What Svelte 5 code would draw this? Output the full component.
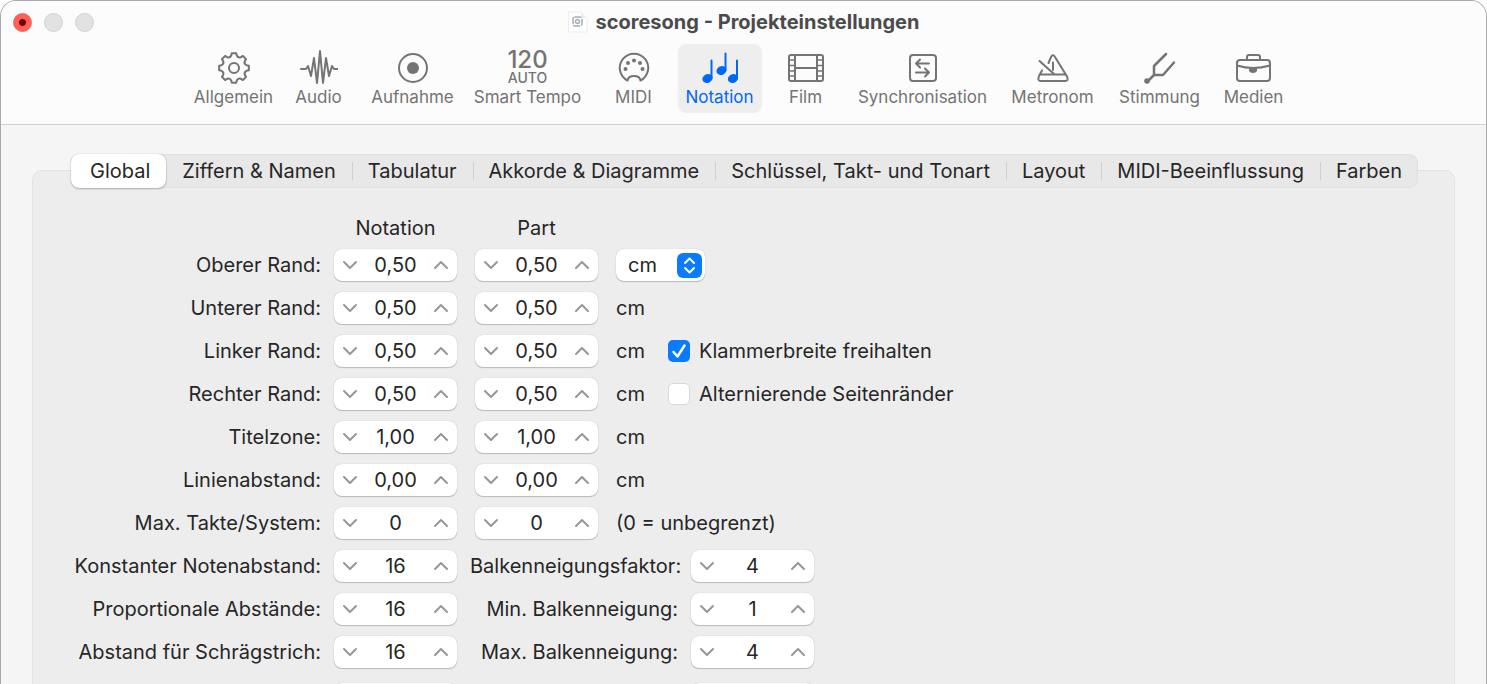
<script lang="ts">
	let activeTool = $state('Notation');
	let activeTab = $state('Global');
	let unit = $state('cm');
	let bracketWidth = $state(true);
	let alternatingMargins = $state(false);

	const tools = [
		{ name: 'Allgemein', width: 80 },
		{ name: 'Audio', width: 82 },
		{ name: 'Aufnahme', width: 98 },
		{ name: 'Smart Tempo', width: 124 },
		{ name: 'MIDI', width: 80 },
		{ name: 'Notation', width: 84 },
		{ name: 'Film', width: 80 },
		{ name: 'Synchronisation', width: 146 },
		{ name: 'Metronom', width: 106 },
		{ name: 'Stimmung', width: 100 },
		{ name: 'Medien', width: 80 }
	];

	const tabs = [
		'Global',
		'Ziffern & Namen',
		'Tabulatur',
		'Akkorde & Diagramme',
		'Schlüssel, Takt- und Tonart',
		'Layout',
		'MIDI-Beeinflussung',
		'Farben'
	];

	let margins = $state([
		{ label: 'Oberer Rand', score: '0,50', part: '0,50' },
		{ label: 'Unterer Rand', score: '0,50', part: '0,50' },
		{ label: 'Linker Rand', score: '0,50', part: '0,50' },
		{ label: 'Rechter Rand', score: '0,50', part: '0,50' },
		{ label: 'Titelzone', score: '1,00', part: '1,00' },
		{ label: 'Linienabstand', score: '0,00', part: '0,00' },
		{ label: 'Max. Takte/System', score: '0', part: '0' }
	]);

	let spacing = $state([
		{ label: 'Konstanter Notenabstand', value: '16', beamLabel: 'Balkenneigungsfaktor', beam: '4' },
		{ label: 'Proportionale Abstände', value: '16', beamLabel: 'Min. Balkenneigung', beam: '1' },
		{ label: 'Abstand für Schrägstrich', value: '16', beamLabel: 'Max. Balkenneigung', beam: '4' }
	]);

	// outline of the gear, eight teeth with rounded valleys between them
	function gearPath() {
		const at = (r: number, a: number) =>
			`${(17 + r * Math.sin(a)).toFixed(2)} ${(17 - r * Math.cos(a)).toFixed(2)}`;
		let d = '';
		for (let i = 0; i < 8; i++) {
			const a = (i * Math.PI) / 4;
			d += `${i ? 'L' : 'M'}${at(15, a - 0.15)}L${at(15, a + 0.15)}L${at(12.8, a + 0.22)}`;
			d += `Q${at(10.6, a + Math.PI / 8)} ${at(12.8, a + Math.PI / 4 - 0.22)}`;
		}
		return d + 'Z';
	}

	// values use a decimal comma, keep the number of decimals while stepping
	function step(value: string, direction: number) {
		const decimals = value.split(',')[1]?.length ?? 0;
		const next = Math.max(0, parseFloat(value.replace(',', '.')) + direction / 10 ** decimals);
		return next.toFixed(decimals).replace('.', ',');
	}
</script>

{#snippet stepper(id: string, name: string, value: string, update: (v: string) => void)}
	<div class="stepper">
		<button type="button" aria-label={`${name} verringern`} onclick={() => update(step(value, -1))}>
			<svg width="16" height="10" viewBox="0 0 16 10"><path d="M2 2l6 6 6-6" /></svg>
		</button>
		<input {id} type="text" aria-label={name} {value} onchange={(e) => update(e.currentTarget.value)} />
		<button type="button" aria-label={`${name} erhöhen`} onclick={() => update(step(value, 1))}>
			<svg width="16" height="10" viewBox="0 0 16 10"><path d="M2 8l6-6 6 6" /></svg>
		</button>
	</div>
{/snippet}

{#snippet icon(name: string)}
	{#if name === 'Smart Tempo'}
		<span class="tempo"><span class="bpm">120</span><span class="mode">AUTO</span></span>
	{:else if name === 'Allgemein'}
		<svg width="34" height="34" viewBox="0 0 34 34">
			<path d={gearPath()} />
			<circle cx="17" cy="17" r="5" />
		</svg>
	{:else if name === 'Audio'}
		<svg width="38" height="36" viewBox="0 0 38 36">
			<path d="M1 19h5l2-3 3 10 3-18 3 25 3-32 3 32 3-25 3 18 3-10 2 3h4" />
		</svg>
	{:else if name === 'Aufnahme'}
		<svg width="34" height="34" viewBox="0 0 34 34">
			<circle cx="17" cy="17" r="14" />
			<circle class="solid" cx="17" cy="17" r="6" />
		</svg>
	{:else if name === 'MIDI'}
		<svg width="34" height="34" viewBox="0 0 34 34">
			<path d="M10.500 29.500A14.200 14.200 0 1 1 23.500 29.500C22.500 23.500 11.500 23.500 10.500 29.500Z" />
			<g class="solid">
				<circle cx="8.500" cy="18" r="2" />
				<circle cx="11" cy="12" r="2" />
				<circle cx="17" cy="9.500" r="2" />
				<circle cx="23" cy="12" r="2" />
				<circle cx="25.500" cy="18" r="2" />
			</g>
		</svg>
	{:else if name === 'Notation'}
		<svg width="38" height="34" viewBox="0 0 38 34">
			<path d="M10.500 27V9.500M24.500 19V2.500M36 27V9.500" />
			<g class="solid">
				<ellipse cx="6.500" cy="27.500" rx="5.200" ry="4.300" transform="rotate(-25 6.500 27.500)" />
				<ellipse cx="20.500" cy="19.500" rx="5.200" ry="4.300" transform="rotate(-25 20.500 19.500)" />
				<ellipse cx="32" cy="27.500" rx="5.200" ry="4.300" transform="rotate(-25 32 27.500)" />
			</g>
		</svg>
	{:else if name === 'Film'}
		<svg width="38" height="34" viewBox="0 0 38 34">
			<rect x="2" y="4" width="34" height="26" rx="2" />
			<path d="M8 4v26M30 4v26M8 17h22" />
			<path class="thin" d="M2 9h6M2 14.500h6M2 20h6M2 25h6M30 9h6M30 14.500h6M30 20h6M30 25h6" />
		</svg>
	{:else if name === 'Synchronisation'}
		<svg width="34" height="34" viewBox="0 0 34 34">
			<rect x="4" y="4" width="26" height="26" rx="3" />
			<path d="M23 12.500H10M14 8.500l-4 4 4 4M10 21.500h13M19 17.500l4 4-4 4" />
		</svg>
	{:else if name === 'Metronom'}
		<svg width="34" height="34" viewBox="0 0 34 34">
			<path d="M12.500 12L15 6Q17 2.500 19 6L31 25.500Q33 30 29 30H5Q1 30 3 25L6 19.500M4 23.500H30M3.500 10L18 23M17 11.500V19" />
		</svg>
	{:else if name === 'Stimmung'}
		<svg width="34" height="34" viewBox="0 0 34 34">
			<path class="fork" d="M23 3L11 15V24H20L31 11.500M11 24L4 31" />
			<circle class="solid" cx="4" cy="30" r="2.800" />
		</svg>
	{:else}
		<svg width="38" height="34" viewBox="0 0 38 34">
			<rect x="2" y="9" width="33" height="21" rx="3" />
			<path d="M12 9V6Q12 4 14 4H23Q25 4 25 6V9M2 14.500Q18 19.500 35 14.500" />
			<path class="solid" d="M14 17H22V20Q21 22 18 22T14 20Z" />
		</svg>
	{/if}
{/snippet}

<div class="window">
	<header>
		<div class="titlebar">
			<div class="lights">
				<button type="button" class="close" aria-label="Schließen"></button>
				<button type="button" aria-label="Minimieren"></button>
				<button type="button" aria-label="Zoomen"></button>
			</div>
			<h1>
				<svg width="20" height="22" viewBox="0 0 20 22" class="doc">
					<path class="sheet" d="M1 1H13L19 7V21H1Z" />
					<path class="fold" d="M13 1V7H19Z" />
					<rect x="5" y="6" width="9" height="9" rx="2" stroke-dasharray="6 2" />
					<circle cx="9.500" cy="10.500" r="2" />
				</svg>
				scoresong - Projekteinstellungen
			</h1>
		</div>
		<nav>
			{#each tools as tool}
				<button
					type="button"
					class="tool"
					class:active={activeTool === tool.name}
					style:width={`${tool.width}px`}
					onclick={() => (activeTool = tool.name)}
				>
					<span class="icon">{@render icon(tool.name)}</span>
					<span>{tool.name}</span>
				</button>
			{/each}
		</nav>
	</header>

	<main>
		<div class="tabs" role="tablist">
			{#each tabs as tab}
				<button
					type="button"
					role="tab"
					class="tab"
					class:selected={activeTab === tab}
					aria-selected={activeTab === tab}
					onclick={() => (activeTab = tab)}
				>{tab}</button>
			{/each}
		</div>

		<form>
			<div class="row heading">
				<span class="label"></span>
				<span class="column">Notation</span>
				<span class="column">Part</span>
			</div>

			{#each margins as row, i}
				<div class="row">
					<label class="label" for={`margin-${i}`}>{row.label}:</label>
					{@render stepper(`margin-${i}`, row.label, row.score, (v) => (row.score = v))}
					{@render stepper(`part-${i}`, `${row.label} Part`, row.part, (v) => (row.part = v))}
					{#if i === 0}
						<div class="popup">
							<select aria-label="Einheit" bind:value={unit}>
								<option value="cm">cm</option>
								<option value="Zoll">Zoll</option>
							</select>
							<svg width="25" height="25" viewBox="0 0 25 25">
								<rect width="25" height="25" rx="6" />
								<path d="M8 10l4.500-4.500L17 10M8 15l4.500 4.500L17 15" />
							</svg>
						</div>
					{:else if i === margins.length - 1}
						<span class="unit">(0 = unbegrenzt)</span>
					{:else}
						<span class="unit">{unit}</span>
					{/if}
					{#if i === 2}
						<label class="check"><input type="checkbox" bind:checked={bracketWidth} />Klammerbreite freihalten</label>
					{:else if i === 3}
						<label class="check"><input type="checkbox" bind:checked={alternatingMargins} />Alternierende Seitenränder</label>
					{/if}
				</div>
			{/each}

			{#each spacing as row, i}
				<div class="row">
					<label class="label" for={`spacing-${i}`}>{row.label}:</label>
					{@render stepper(`spacing-${i}`, row.label, row.value, (v) => (row.value = v))}
					<label class="beam-label" for={`beam-${i}`}>{row.beamLabel}:</label>
					{@render stepper(`beam-${i}`, row.beamLabel, row.beam, (v) => (row.beam = v))}
				</div>
			{/each}

			<div class="row next" aria-hidden="true">
				<span class="label"></span>
				<div class="stepper"></div>
				<span class="beam-label"></span>
				<div class="stepper"></div>
			</div>
		</form>
	</main>
</div>

<style>
	:global(body) {
		background: #fff;
	}

	.window {
		box-sizing: border-box;
		height: 100vh;
		display: flex;
		flex-direction: column;
		overflow: hidden;
		border: 1px solid #a9a9a9;
		border-bottom: 0;
		border-radius: 16px 16px 0 0;
		background: #f5f5f5;
		color: #262626;
		font-family: Inter, 'Liberation Sans', sans-serif;
		font-size: 20px;
		line-height: 24px;
	}

	button,
	input,
	select {
		margin: 0;
		padding: 0;
		border: 0;
		background: none;
		color: inherit;
		font: inherit;
	}

	svg {
		display: block;
		fill: none;
		stroke: currentColor;
		stroke-width: 2;
		stroke-linecap: round;
		stroke-linejoin: round;
	}

	.solid {
		fill: currentColor;
		stroke: none;
	}

	.thin {
		stroke-width: 1.5;
	}

	.fork {
		stroke-width: 2.5;
	}

	header {
		flex: none;
		background: #fcfcfc;
		border-bottom: 1px solid #d2d2d2;
		padding-bottom: 11px;
	}

	.titlebar {
		display: grid;
		grid-template-columns: 1fr auto 1fr;
		align-items: center;
		height: 43px;
		padding: 0 12px;
	}

	.lights {
		display: flex;
		gap: 12px;
	}

	.lights button {
		box-sizing: border-box;
		width: 19px;
		height: 19px;
		border: 1px solid #d0d0d0;
		border-radius: 50%;
		background: #e2e2e2;
	}

	.lights .close {
		border-color: #f4605a;
		background: radial-gradient(circle, #790000 3px, #ff5f57 4px);
	}

	h1 {
		display: flex;
		align-items: center;
		gap: 8px;
		margin: 0;
		padding-bottom: 2px;
		color: #4b4b4b;
		font-size: 20px;
		font-weight: 700;
	}

	.doc {
		stroke: #a4adb7;
		stroke-width: 1.5;
	}

	.doc .sheet {
		fill: #fff;
		stroke: #ececec;
		stroke-width: 1;
	}

	.doc .fold {
		fill: #f0f0f0;
		stroke: none;
	}

	nav {
		display: flex;
		justify-content: center;
		gap: 4px;
	}

	.tool {
		display: flex;
		flex-direction: column;
		align-items: center;
		height: 69px;
		border-radius: 8px;
		color: #747474;
		font-size: 17px;
		line-height: 20px;
		white-space: nowrap;
	}

	.tool.active {
		background: #eee;
		color: #0068f5;
	}

	.icon {
		display: flex;
		align-items: center;
		justify-content: center;
		box-sizing: border-box;
		height: 43px;
		padding-top: 5px;
	}

	.tempo {
		display: flex;
		flex-direction: column;
		align-items: center;
		font-weight: 500;
	}

	.bpm {
		font-size: 24px;
		line-height: 20px;
	}

	.mode {
		font-size: 14px;
		line-height: 16px;
	}

	main {
		flex: 1 0 auto;
		margin: 45px 31px 0;
		border: 1px solid #e3e3e3;
		border-bottom: 0;
		border-radius: 10px 10px 0 0;
		background: #ededed;
	}

	.tabs {
		display: flex;
		margin: -17px 36px 0 38px;
		border-radius: 9px;
		background: #e8e8e8;
		box-shadow: inset 0 0 2px #d2d2d2;
	}

	.tab {
		flex: 1 1 auto;
		position: relative;
		height: 34px;
		border-radius: 8px;
		white-space: nowrap;
	}

	.tab:first-child {
		padding-left: 3px;
	}

	.tab + .tab:not(.selected + .tab)::before {
		content: '';
		position: absolute;
		left: 0;
		top: 8px;
		width: 1px;
		height: 18px;
		background: #d0d0d0;
	}

	.tab.selected {
		background: #fff;
		box-shadow: 0 0 1px rgba(0, 0, 0, 0.3), 0 1px 2px rgba(0, 0, 0, 0.25);
	}

	form {
		display: flex;
		flex-direction: column;
		gap: 11px;
		padding-top: 30px;
	}

	.row {
		display: flex;
		align-items: center;
		height: 32px;
		white-space: nowrap;
	}

	.row.heading {
		height: 20px;
	}

	.row.next {
		margin-top: 4px;
	}

	.label {
		flex: none;
		width: 288px;
		margin-right: 13px;
		text-align: right;
	}

	.column {
		width: 123px;
		margin-right: 18px;
		text-align: center;
	}

	.stepper {
		display: flex;
		flex: none;
		box-sizing: border-box;
		width: 123px;
		height: 32px;
		margin-right: 18px;
		border-radius: 8px;
		background: #fff;
		box-shadow: 0 0 1px rgba(0, 0, 0, 0.25), 0 1px 1px rgba(0, 0, 0, 0.2);
	}

	.stepper button {
		display: flex;
		align-items: center;
		justify-content: center;
		flex: none;
		width: 32px;
		color: #979797;
	}

	.stepper input {
		flex: 1;
		min-width: 0;
		width: 0;
		text-align: center;
	}

	.popup {
		display: flex;
		align-items: center;
		position: relative;
		width: 89px;
		height: 32px;
		border-radius: 8px;
		background: #fff;
		box-shadow: 0 0 1px rgba(0, 0, 0, 0.25), 0 1px 1px rgba(0, 0, 0, 0.2);
	}

	.popup select {
		width: 100%;
		height: 100%;
		padding-left: 12px;
		appearance: none;
	}

	.popup svg {
		position: absolute;
		right: 3px;
		pointer-events: none;
		stroke: #fff;
	}

	.popup rect {
		fill: #0a7aff;
		stroke: none;
	}

	.unit {
		min-width: 52px;
	}

	.check {
		display: flex;
		align-items: center;
		gap: 9px;
	}

	.check input {
		appearance: none;
		box-sizing: border-box;
		width: 22px;
		height: 22px;
		border: 1px solid #d8d8d8;
		border-radius: 5px;
		background: #fff;
	}

	.check input:checked {
		border: 0;
		background: #0a7aff url("data:image/svg+xml,%3Csvg xmlns='http://www.w3.org/2000/svg' viewBox='0 0 22 22'%3E%3Cpath d='M5.500 12l4 4.500 7-11' fill='none' stroke='white' stroke-width='2.500' stroke-linecap='round' stroke-linejoin='round'/%3E%3C/svg%3E");
	}

	.beam-label {
		width: 208px;
		margin-left: -5px;
		margin-right: 13px;
		text-align: right;
	}
</style>
